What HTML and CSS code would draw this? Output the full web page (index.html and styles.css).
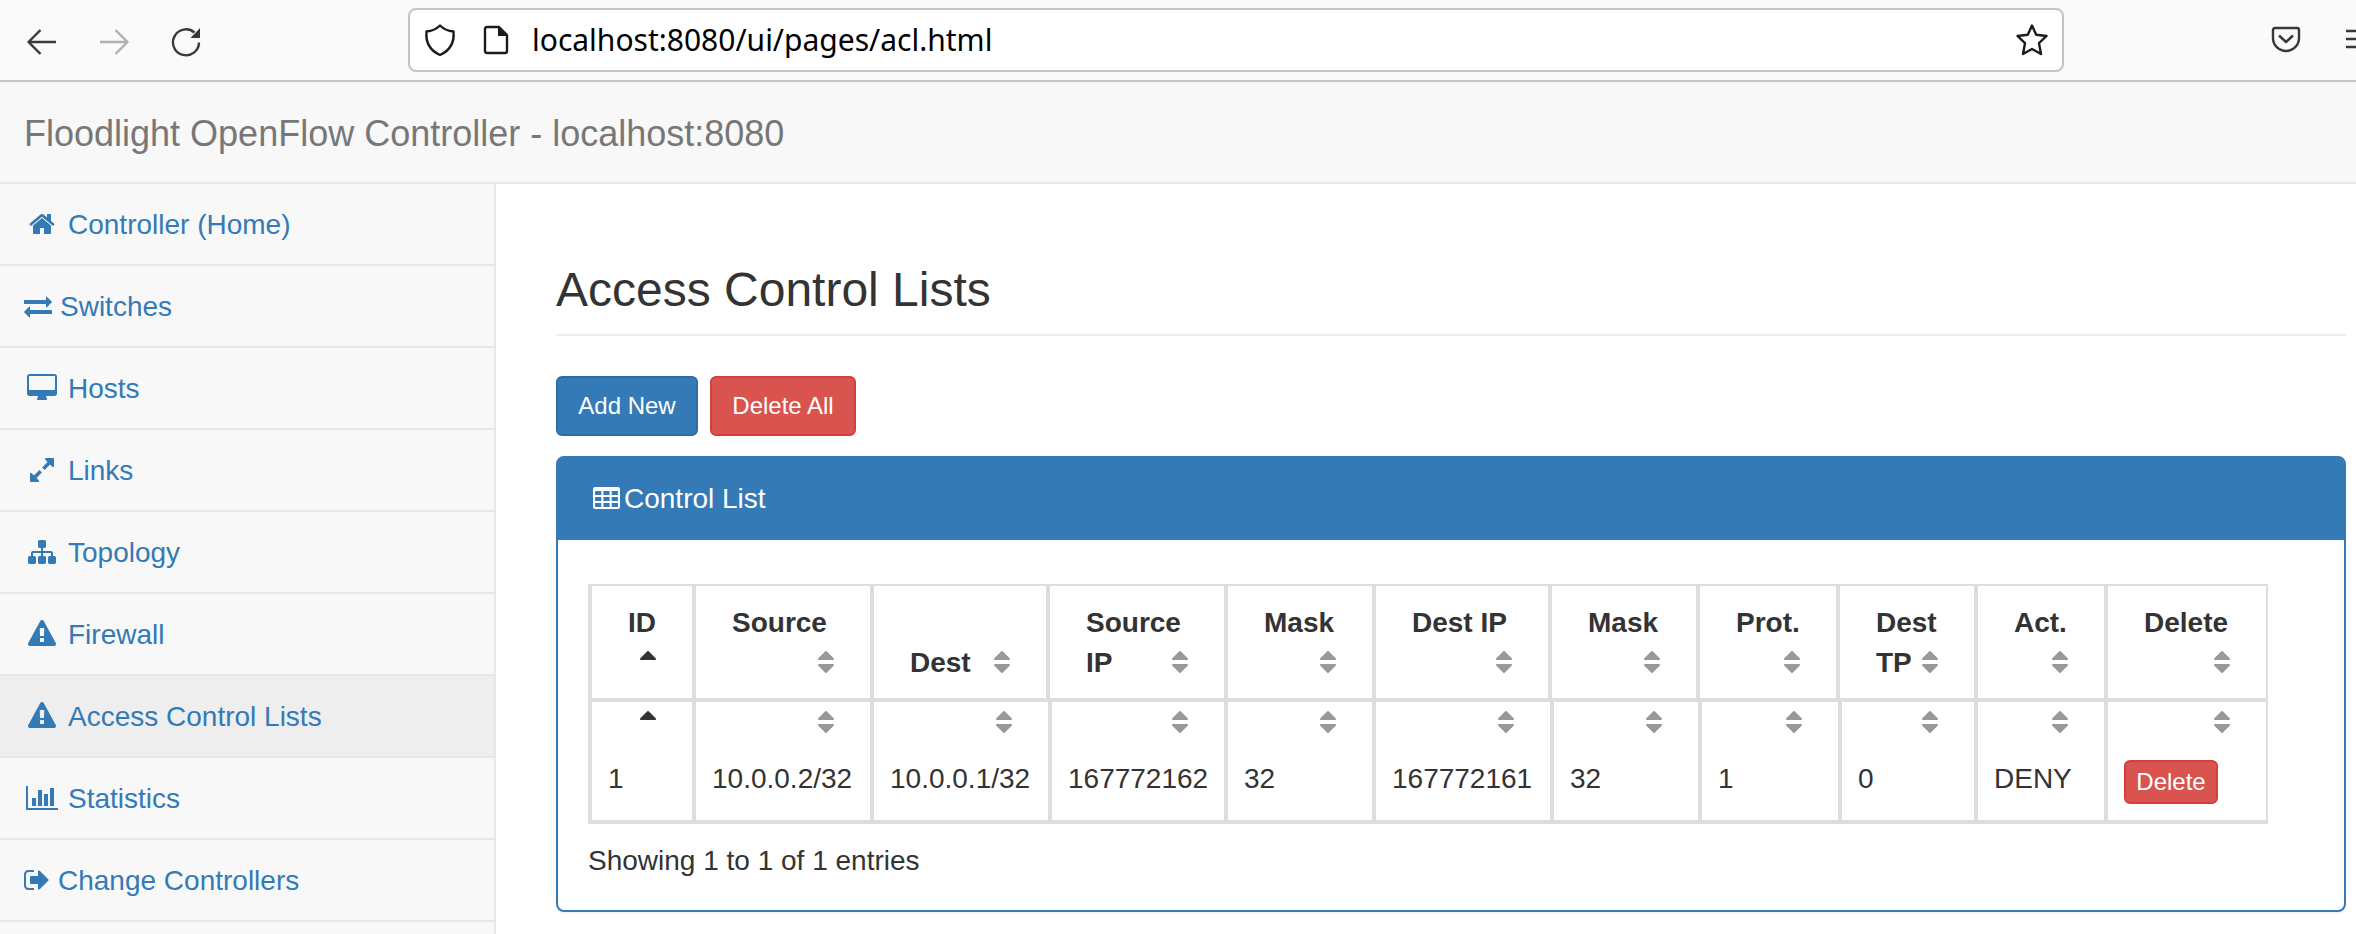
FILE: index.html
```html
<!DOCTYPE html>
<html lang="en">
<head>
<meta charset="utf-8">
<title>Floodlight OpenFlow Controller</title>
<link rel="stylesheet" href="styles.css">
</head>
<body>
<svg class="defs" width="0" height="0">
  <symbol id="sort" viewBox="384 0 1024 1792"><path d="M1408 1088q0 26-19 45l-448 448q-19 19-45 19t-45-19l-448-448q-19-19-19-45t19-45 45-19h896q26 0 45 19t19 45zm0-384q0 26-19 45t-45 19h-896q-26 0-45-19t-19-45 19-45l448-448q19-19 45-19t45 19l448 448q19 19 19 45z"/></symbol>
  <symbol id="sort-up" viewBox="384 0 1024 1792"><path d="M1408 704q0 26-19 45t-45 19h-896q-26 0-45-19t-19-45 19-45l448-448q19-19 45-19t45 19l448 448q19 19 19 45z"/></symbol>
  <symbol id="warning" viewBox="0 0 1792 1792"><path d="M1024 1375v-190q0-14-9.5-23.5t-22.5-9.5h-192q-13 0-22.5 9.5t-9.5 23.5v190q0 14 9.5 23.5t22.5 9.5h192q13 0 22.5-9.5t9.5-23.5zm-2-374l18-459q0-12-10-19-13-11-24-11h-220q-11 0-24 11-10 7-10 21l17 457q0 10 10 16.5t24 6.5h185q14 0 23.5-6.5t10.5-16.5zm-14-934l768 1408q35 63-2 126-17 29-46.5 46t-63.5 17h-1536q-34 0-63.5-17t-46.5-46q-37-63-2-126l768-1408q17-31 47-49t65-18 65 18 47 49z"/></symbol>
</svg>

<div class="toolbar">
  <div class="nav-buttons">
    <svg width="32" height="32" viewBox="0 0 32 32" class="line"><path d="M30 16H3M14.500 4L2.500 16L14.500 28"/></svg>
    <svg width="32" height="32" viewBox="0 0 32 32" class="line disabled"><path d="M2 16H29M17.500 4L29.500 16L17.500 28"/></svg>
    <svg width="32" height="32" viewBox="0 0 32 32" class="line"><path d="M29 16.500A13 13 0 1 1 24.500 6.500"/><path class="solid" d="M30 2V12H20.500Z"/></svg>
  </div>
  <div class="urlbar">
    <svg width="32" height="34" viewBox="0 0 32 34" class="line"><path d="M16 2.500C19.500 6 24 8 29.500 8.500C30.500 19 26 27.500 16 32C6 27.500 1.500 19 2.500 8.500C8 8 12.500 6 16 2.500Z"/></svg>
    <svg width="28" height="32" viewBox="0 0 28 32" class="line page"><path d="M5 3H17L25 11V27Q25 29 23 29H5Q3 29 3 27V5Q3 3 5 3Z"/><path class="solid" d="M16 2V12H26Z"/></svg>
    <span class="url">localhost:8080/ui/pages/acl.html</span>
    <svg width="34" height="34" viewBox="0 0 34 34" class="line star"><path d="M17 2.500L21.200 11.700L31.500 13L24 20.200L26 31L17 26L8 31L10 20.200L2.500 13L12.800 11.700Z"/></svg>
  </div>
  <svg width="32" height="32" viewBox="0 0 32 32" class="line pocket"><path d="M5 4H27Q29 4 29 6V14A13 13 0 0 1 3 14V6Q3 4 5 4Z"/><path d="M9 11.500L16 18L23 11.500"/></svg>
  <svg width="10" height="32" viewBox="0 0 10 32" class="line menu"><path d="M0 7H10M0 15H10M0 23H10"/></svg>
</div>

<header class="brand">Floodlight OpenFlow Controller - localhost:8080</header>

<div class="layout">
  <nav class="sidebar">
    <a class="item"><span class="fw"><svg width="28" height="28" viewBox="0 0 1792 1792"><path d="M1472 992v480q0 26-19 45t-45 19h-384v-384h-256v384h-384q-26 0-45-19t-19-45v-480q0-1 .5-3t.5-3l575-474 575 474q1 2 1 6zm223-69l-62 74q-8 9-21 11h-3q-13 0-21-7l-692-577-692 577q-12 8-24 7-13-2-21-11l-62-74q-8-10-7-23.500t11-21.500l719-599q32-26 76-26t76 26l244 204v-195q0-14 9-23t23-9h192q14 0 23 9t9 23v408l219 182q10 8 11 21.500t-7 23.500z"/></svg></span>Controller (Home)</a>
    <a class="item"><svg width="28" height="28" viewBox="0 0 1792 1792"><path d="M1792 1184v192q0 13-9.500 22.500t-22.500 9.500h-1376v192q0 13-9.500 22.500t-22.500 9.500q-12 0-24-10l-319-320q-9-9-9-22 0-14 9-23l320-320q9-9 23-9 13 0 22.500 9.500t9.500 22.500v192h1376q13 0 22.500 9.500t9.500 22.500zm0-544q0 14-9 23l-320 320q-9 9-23 9-13 0-22.500-9.500t-9.500-22.500v-192h-1376q-13 0-22.500-9.500t-9.500-22.500v-192q0-13 9.500-22.500t22.500-9.500h1376v-192q0-14 9-23t23-9q12 0 24 10l319 319q9 9 9 23z"/></svg>Switches</a>
    <a class="item"><span class="fw"><svg width="28" height="28" viewBox="0 0 1792 1792"><path d="M1728 992v-832q0-13-9.500-22.500t-22.500-9.500h-1600q-13 0-22.500 9.500t-9.500 22.500v832q0 13 9.500 22.500t22.500 9.500h1600q13 0 22.500-9.500t9.500-22.500zm128-832v1088q0 66-47 113t-113 47h-544q0 37 16 77.500t32 71 16 43.500q0 26-19 45t-45 19h-512q-26 0-45-19t-19-45q0-14 16-44t32-70 16-78h-544q-66 0-113-47t-47-113v-1088q0-66 47-113t113-47h1600q66 0 113 47t47 113z"/></svg></span>Hosts</a>
    <a class="item"><span class="fw"><svg width="28" height="28" viewBox="0 0 1792 1792"><path d="M883 1056q0 13-10 23l-332 332 144 144q19 19 19 45t-19 45-45 19h-448q-26 0-45-19t-19-45v-448q0-26 19-45t45-19 45 19l144 144 332-332q10-10 23-10t23 10l114 114q10 10 10 23zm781-864v448q0 26-19 45t-45 19-45-19l-144-144-332 332q-10 10-23 10t-23-10l-114-114q-10-10-10-23t10-23l332-332-144-144q-19-19-19-45t19-45 45-19h448q26 0 45 19t19 45z"/></svg></span>Links</a>
    <a class="item"><span class="fw"><svg width="28" height="28" viewBox="0 0 1792 1792"><path d="M1792 1248v320q0 40-28 68t-68 28h-320q-40 0-68-28t-28-68v-320q0-40 28-68t68-28h96v-192h-512v192h96q40 0 68 28t28 68v320q0 40-28 68t-68 28h-320q-40 0-68-28t-28-68v-320q0-40 28-68t68-28h96v-192h-512v192h96q40 0 68 28t28 68v320q0 40-28 68t-68 28h-320q-40 0-68-28t-28-68v-320q0-40 28-68t68-28h96v-192q0-52 38-90t90-38h512v-192h-96q-40 0-68-28t-28-68v-320q0-40 28-68t68-28h320q40 0 68 28t28 68v320q0 40-28 68t-68 28h-96v192h512q52 0 90 38t38 90v192h96q40 0 68 28t28 68z"/></svg></span>Topology</a>
    <a class="item"><span class="fw"><svg width="28" height="28"><use href="#warning"/></svg></span>Firewall</a>
    <a class="item active"><span class="fw"><svg width="28" height="28"><use href="#warning"/></svg></span>Access Control Lists</a>
    <a class="item"><span class="fw"><svg width="32" height="28" viewBox="0 0 2048 1792"><path d="M640 896v512h-256v-512h256zm384-512v1024h-256v-1024h256zm1024 1152v128h-2048v-1536h128v1408h1920zm-640-896v768h-256v-768h256zm384-384v1152h-256v-1152h256z"/></svg></span>Statistics</a>
    <a class="item"><svg width="26" height="28" viewBox="64 0 1664 1792"><path d="M704 1440q0 4 1 20t.5 26.500-3 23.500-10 19.500-20.500 6.500h-320q-119 0-203.500-84.500t-84.500-203.500v-704q0-119 84.500-203.500t203.500-84.500h320q13 0 22.500 9.500t9.500 22.500q0 4 1 20t.5 26.500-3 23.500-10 19.500-20.500 6.500h-320q-66 0-113 47t-47 113v704q0 66 47 113t113 47h312l11.500 1 11.500 3 8 5.500 7 9 2 13.500zm928-544q0 26-19 45l-544 544q-19 19-45 19t-45-19-19-45v-288h-448q-26 0-45-19t-19-45v-384q0-26 19-45t45-19h448v-288q0-26 19-45t45-19 45 19l544 544q19 19 19 45z"/></svg>Change Controllers</a>
  </nav>

  <main class="content">
    <h1>Access Control Lists</h1>
    <div class="actions">
      <button class="btn primary add">Add New</button>
      <button class="btn danger delete-all">Delete All</button>
    </div>
    <section class="panel">
      <div class="panel-head"><span class="fw"><svg width="27" height="28" viewBox="0 0 26 28" preserveAspectRatio="none"><path fill-rule="evenodd" d="M2 2H24Q26 2 26 4V22Q26 24 24 24H2Q0 24 0 22V4Q0 2 2 2ZM2 6V10H8V6ZM10 6V10H16V6ZM18 6V10H24V6ZM2 12V16H8V12ZM10 12V16H16V12ZM18 12V16H24V12ZM2 18V22H8V18ZM10 18V22H16V18ZM18 18V22H24V18Z"/></svg></span>Control List</div>
      <div class="panel-body">
        <div class="table">
          <div class="row head">
            <div class="cell"><div>ID<svg class="sort asc"><use href="#sort-up"/></svg></div></div>
            <div class="cell"><div>Source<svg class="sort"><use href="#sort"/></svg></div></div>
            <div class="cell"><div>Dest<svg class="sort"><use href="#sort"/></svg></div></div>
            <div class="cell"><div>Source IP<svg class="sort"><use href="#sort"/></svg></div></div>
            <div class="cell"><div>Mask<svg class="sort"><use href="#sort"/></svg></div></div>
            <div class="cell"><div>Dest IP<svg class="sort"><use href="#sort"/></svg></div></div>
            <div class="cell"><div>Mask<svg class="sort"><use href="#sort"/></svg></div></div>
            <div class="cell"><div>Prot.<svg class="sort"><use href="#sort"/></svg></div></div>
            <div class="cell"><div>Dest TP<svg class="sort"><use href="#sort"/></svg></div></div>
            <div class="cell"><div>Act.<svg class="sort"><use href="#sort"/></svg></div></div>
            <div class="cell"><div>Delete<svg class="sort"><use href="#sort"/></svg></div></div>
          </div>
          <div class="row data">
            <div class="cell"><svg class="sort asc"><use href="#sort-up"/></svg><span>1</span></div>
            <div class="cell"><svg class="sort"><use href="#sort"/></svg><span>10.0.0.2/32</span></div>
            <div class="cell"><svg class="sort"><use href="#sort"/></svg><span>10.0.0.1/32</span></div>
            <div class="cell"><svg class="sort"><use href="#sort"/></svg><span>167772162</span></div>
            <div class="cell"><svg class="sort"><use href="#sort"/></svg><span>32</span></div>
            <div class="cell"><svg class="sort"><use href="#sort"/></svg><span>167772161</span></div>
            <div class="cell"><svg class="sort"><use href="#sort"/></svg><span>32</span></div>
            <div class="cell"><svg class="sort"><use href="#sort"/></svg><span>1</span></div>
            <div class="cell"><svg class="sort"><use href="#sort"/></svg><span>0</span></div>
            <div class="cell"><svg class="sort"><use href="#sort"/></svg><span>DENY</span></div>
            <div class="cell"><svg class="sort"><use href="#sort"/></svg><button class="btn danger small">Delete</button></div>
          </div>
        </div>
        <p class="info">Showing 1 to 1 of 1 entries</p>
      </div>
    </section>
  </main>
</div>
</body>
</html>
```
FILE: styles.css
```css
* { box-sizing: border-box; }
body {
  margin: 0;
  height: 934px;
  overflow: hidden;
  display: flex;
  flex-direction: column;
  background: #fff;
  color: #333;
  font: 28px/40px "Liberation Sans", Arial, sans-serif;
}
svg { display: block; flex: none; fill: currentColor; overflow: visible; }
.defs { position: absolute; }

/* Browser toolbar */
.toolbar {
  flex: none;
  height: 82px;
  display: flex;
  align-items: center;
  background: #fafafa;
  border-bottom: 2px solid #c6c6c6;
}
.line { fill: none; stroke: #38383a; stroke-width: 2.400; stroke-linejoin: round; }
.line .solid { fill: #38383a; stroke: none; }
.disabled { stroke: #b0b0b0; }
.nav-buttons { display: flex; gap: 40px; width: 408px; padding: 3px 0 0 26px; }
.urlbar {
  width: 1656px;
  height: 64px;
  display: flex;
  align-items: center;
  padding-left: 14px;
  background: #fff;
  border: 2px solid #c4c4c4;
  border-radius: 8px;
}
.urlbar .line { stroke: #1b1b1e; }
.urlbar .solid { fill: #1b1b1e; }
.page { margin-left: 26px; }
.url {
  margin-left: 22px;
  color: #000;
  font: 30px/40px "Noto Sans", sans-serif;
}
.star { margin-left: auto; margin-right: 13px; }
.pocket { margin-left: 206px; }
.menu { margin-left: 44px; }

/* Page header */
.brand {
  flex: none;
  height: 102px;
  padding: 32px 24px 28px;
  background: #f8f8f8;
  border-bottom: 2px solid #e7e7e7;
  color: #777;
  font-size: 36px;
}
.layout { flex: 1; display: flex; min-height: 0; }

/* Sidebar */
.sidebar {
  flex: none;
  width: 496px;
  background: #f8f8f8;
  border-right: 2px solid #e7e7e7;
}
.item {
  display: flex;
  align-items: center;
  gap: 8px;
  height: 82px;
  padding: 2px 24px 0;
  border-bottom: 2px solid #e7e7e7;
  color: #337ab7;
}
.item svg { margin-bottom: 2px; }
.active { background: #eee; }
.fw { flex: none; width: 36px; display: flex; justify-content: center; }

/* Content */
.content { flex: 1; padding: 80px 10px 0 60px; }
h1 {
  margin: 0 0 40px;
  height: 72px;
  border-bottom: 2px solid #eee;
  font-size: 48px;
  font-weight: 500;
  line-height: 52px;
}
.actions { display: flex; gap: 12px; margin-bottom: 20px; }
.btn {
  padding: 10px 0;
  border: 2px solid;
  border-radius: 6px;
  color: #fff;
  font: 24px/36px "Liberation Sans", Arial, sans-serif;
}
.add { width: 142px; }
.delete-all { width: 146px; }
.primary { background: #337ab7; border-color: #2e6da4; }
.danger { background: #d9534f; border-color: #d43f3a; }
.small { width: 94px; padding: 2px 0; }
.panel {
  height: 456px;
  border: 2px solid #337ab7;
  border-radius: 8px;
  box-shadow: 0 2px 2px rgba(0, 0, 0, .05);
}
.panel-head {
  display: flex;
  align-items: center;
  height: 82px;
  padding: 0 30px;
  background: #337ab7;
  border-radius: 5px 5px 0 0;
  color: #fff;
}
.panel-body { padding: 44px 30px 0; }

/* Table */
.table { width: 1680px; border: solid #ddd; border-width: 2px 0 0 4px; }
.row { display: grid; border-bottom: 4px solid #ddd; }
.head {
  height: 116px;
  grid-template-columns: 104px 178px 176px 178px 148px 176px 148px 140px 138px 130px 160px;
  font-weight: 700;
}
.data {
  height: 122px;
  grid-template-columns: 104px 178px 178px 176px 148px 178px 148px 140px 136px 130px 160px;
}
.cell { border-right: 4px solid #ddd; }
.cell:last-child { border-right-width: 2px; }
.head .cell { display: flex; align-items: flex-end; padding: 17px 36px 15px; }
.head .cell > div { width: 100%; }
.sort { width: 16px; height: 28px; color: #999; }
.asc { color: #333; }
.head .sort { float: right; margin: 5px 0 7px; }
.data .cell { display: flex; flex-direction: column; align-items: flex-start; padding-left: 16px; }
.data .sort { align-self: flex-end; margin: 6px 36px 22px 0; }
.data span { margin-top: 1px; }
.data .btn { margin-top: 2px; }
.info { margin: 17px 0 0; }
```
